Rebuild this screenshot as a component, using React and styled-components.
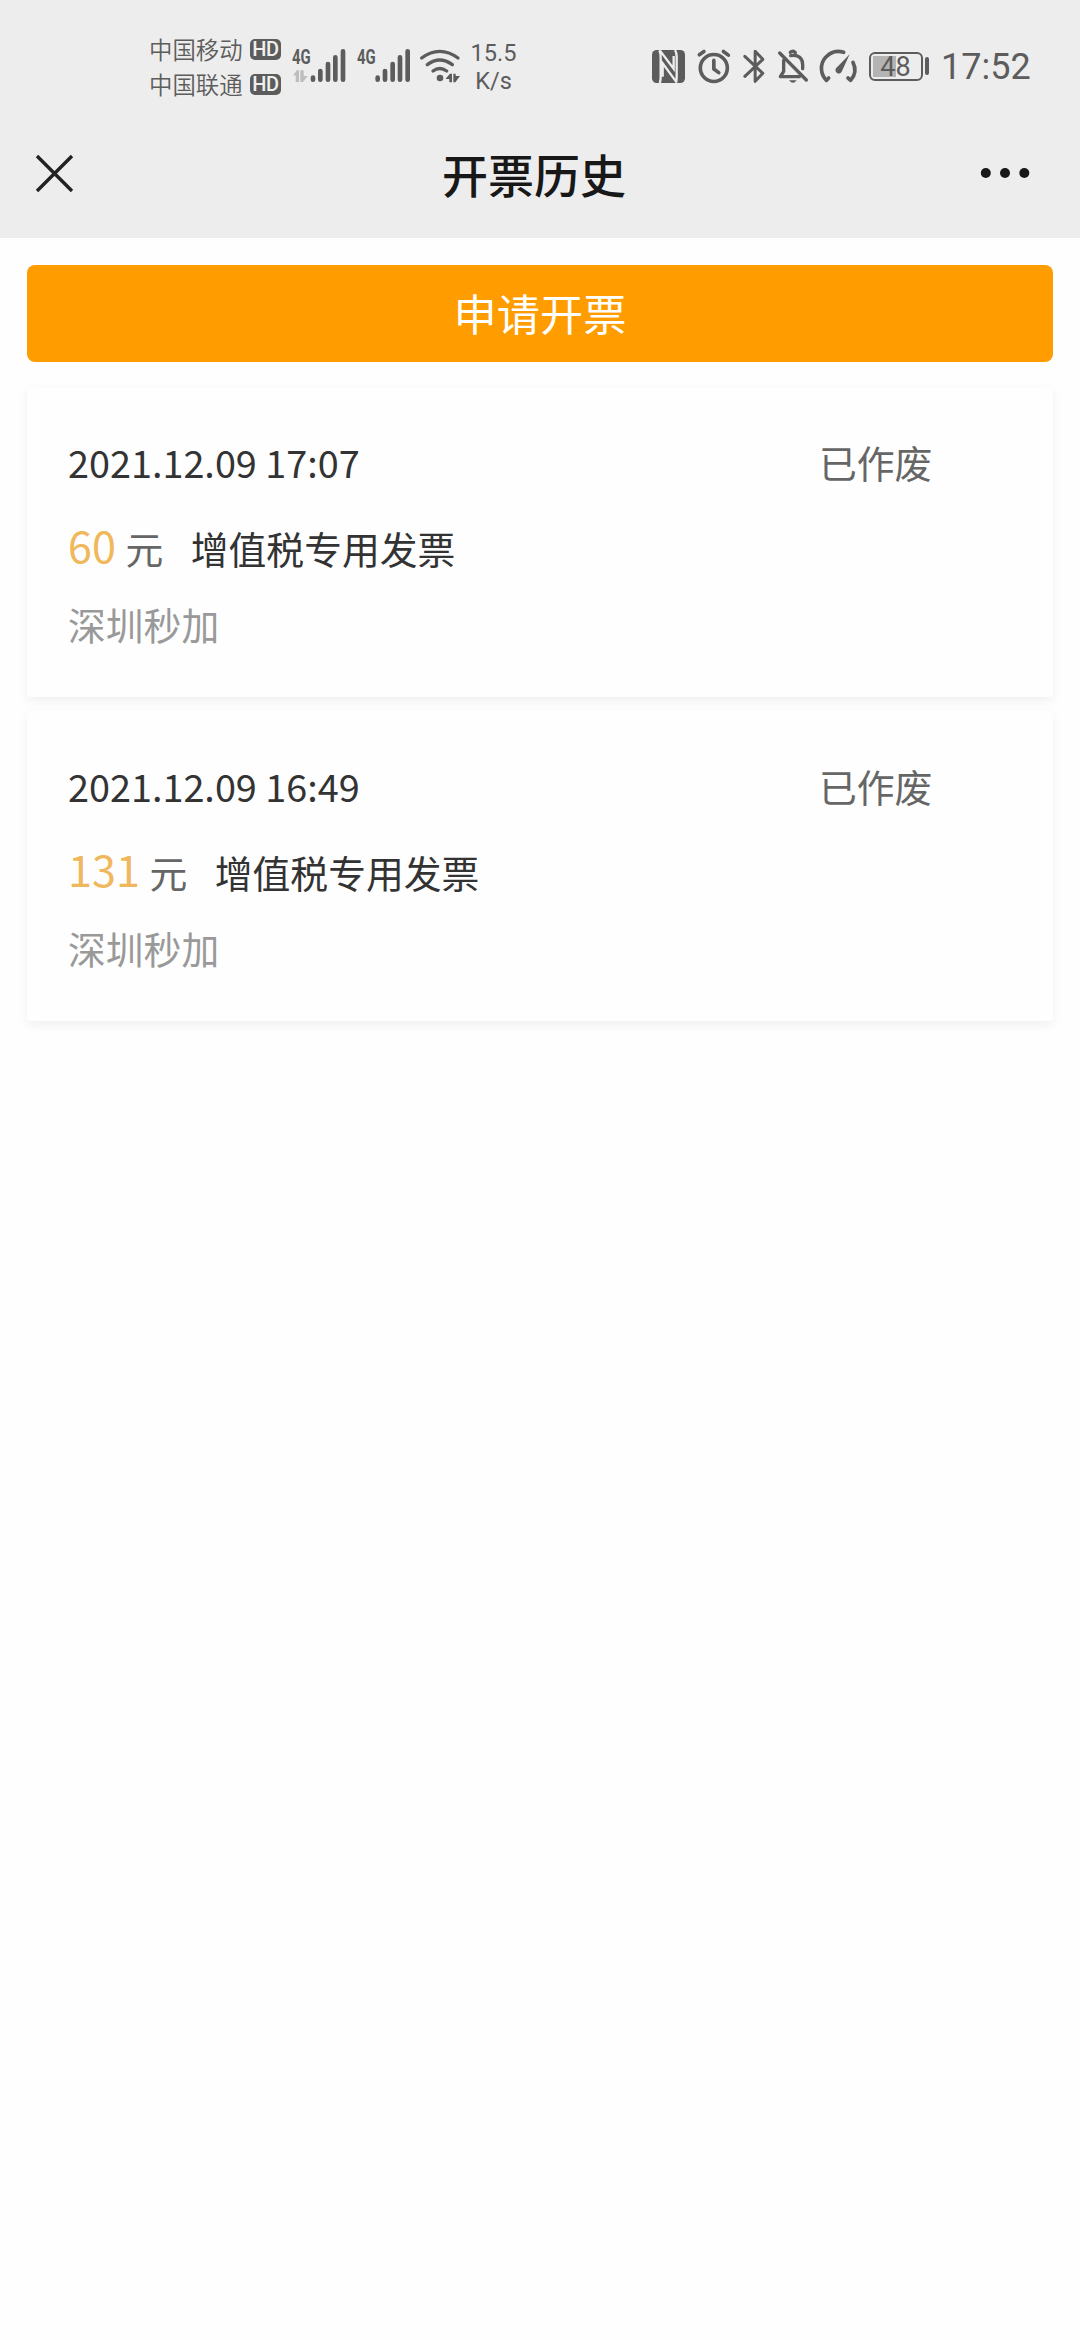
import React from "react";
import styled, { createGlobalStyle } from "styled-components";

const GlobalStyle = createGlobalStyle`
  * { box-sizing: border-box; }
  body {
    margin: 0;
    background: #fefefe;
    font-family: "Noto Sans CJK SC", sans-serif;
  }
`;

const INK = "#5c5c5c";

const Page = styled.div`
  width: 1080px;
  min-height: 2340px;
  display: flex;
  flex-direction: column;
`;

const Header = styled.header`
  background: #ededed;
  height: 238px;
`;

const StatusBar = styled.div`
  height: 132px;
  display: flex;
  align-items: center;
  justify-content: space-between;
  padding: 0 50px 0 149px;
  color: ${INK};
`;

const StatusGroup = styled.div`
  display: flex;
  align-items: center;
`;

const Carriers = styled.div`
  display: flex;
  flex-direction: column;
  padding-top: 2px;
  margin-right: 9px;
`;

const Carrier = styled.div`
  display: flex;
  align-items: center;
  height: 35px;
  gap: 7px;
  font-size: 23.4px;
  font-weight: 350;
  line-height: 32px;
`;

const CarrierName = styled.span`
  width: 94px;
  white-space: nowrap;
  transform: translateY(-1px);
`;

const HdBadge = styled.span`
  width: 31px;
  height: 21px;
  border-radius: 5px;
  background: ${INK};
  color: #f0f0f0;
  font: 500 20px/21px Roboto, sans-serif;
  text-align: center;
  letter-spacing: -0.3px;
`;

const Icon = styled.svg`
  display: block;
  flex: none;
  height: 40px;
  width: ${(p) => p.$width}px;
  margin-left: ${(p) => p.$gap || 0}px;
  overflow: visible;
  fill: none;
  stroke: ${INK};
  stroke-linecap: round;
  stroke-linejoin: round;
`;

const NetLabel = styled.text`
  font: 700 63px Roboto, sans-serif;
  fill: ${INK};
  stroke: none;
`;

const Speed = styled.div`
  margin-left: 10px;
  width: 48px;
  text-align: center;
  font: 400 23.5px/28px Roboto, sans-serif;
  padding-top: 1px;
`;

const Battery = styled.div`
  display: flex;
  align-items: center;
  gap: 2px;
  margin-left: 12px;
`;

const BatteryBody = styled.div`
  width: 54px;
  height: 29px;
  border: 2px solid ${INK};
  border-radius: 6px;
  background: linear-gradient(to right, #b4b4b4 23px, transparent 23px) 2px 2px / 46px 21px no-repeat;
  font: 400 27px/26px Roboto, sans-serif;
  text-align: center;
`;

const BatteryTip = styled.div`
  flex: none;
  width: 4.5px;
  height: 18px;
  border-radius: 2px;
  background: ${INK};
`;

const Clock = styled.div`
  margin-left: 12px;
  width: 89px;
  font: 400 36px/42px Roboto, sans-serif;
  white-space: nowrap;
  padding-top: 2px;
`;

const NavBar = styled.nav`
  height: 82px;
  display: grid;
  grid-template-columns: 148px 1fr 160px;
  align-items: center;
`;

const NavButton = styled.button`
  border: 0;
  padding: 0;
  background: none;
  display: flex;
  justify-content: ${(p) => (p.$end ? "flex-end" : "flex-start")};
  padding-left: ${(p) => (p.$end ? 0 : 34)}px;
  padding-right: ${(p) => (p.$end ? 50 : 0)}px;
`;

const Title = styled.h1`
  margin: 0;
  text-align: center;
  font-size: 46px;
  font-weight: 500;
  line-height: 66px;
  color: #181818;
`;

const Content = styled.main`
  padding: 27px;
  display: flex;
  flex-direction: column;
`;

const ApplyButton = styled.button`
  height: 97px;
  border: 0;
  border-radius: 8px;
  background: #ff9c00;
  color: #fff;
  font: 400 43.2px/60px "Noto Sans CJK SC", sans-serif;
  padding: 0 0 4px;
  margin-bottom: 25px;
`;

const Card = styled.section`
  height: 310px;
  margin-bottom: 14px;
  padding: 43px 41px 0;
  background: #fefefe;
  border-radius: 4px;
  box-shadow: 0 4px 11px rgba(0, 0, 0, 0.06);
  font-size: 37.8px;
  line-height: 64px;
  color: #333;
`;

const CardTop = styled.div`
  display: grid;
  grid-template-columns: 751px 1fr;
`;

const Status = styled.span`
  color: #666;
`;

const AmountRow = styled.div`
  display: flex;
  align-items: baseline;
  margin-top: 19px;
  height: 66px;
`;

const Amount = styled.span`
  font-size: 43.2px;
  color: #f0b85c;
  transform: translateY(-1px);
`;

const Unit = styled.span`
  color: #666;
  margin: 0 27.5px 0 9.5px;
`;

const Company = styled.div`
  color: #999;
  margin-top: 13px;
`;

const invoices = [
  { time: "2021.12.09 17:07", amount: 60, type: "增值税专用发票", company: "深圳秒加", status: "已作废" },
  { time: "2021.12.09 16:49", amount: 131, type: "增值税专用发票", company: "深圳秒加", status: "已作废" },
];

function Signal({ data, gap }) {
  const shift = data ? 0 : -1;
  return (
    <Icon $width={54} $gap={gap} viewBox="35 78 162 120">
      <NetLabel x="35" y="131" textLength="56" lengthAdjust="spacingAndGlyphs">4G</NetLabel>
      {data && (
        <path d="M38 166L50 151H56V186H46V166ZM60 151H70V168H82L68 186H60Z" fill="#bdbdbd" stroke="none" />
      )}
      <g strokeWidth="14" transform={`translate(${shift} 0)`}>
        <path d="M98 173V179M120 153V179M143 132V179M165 112V179M188 94V179" />
      </g>
    </Icon>
  );
}

function Wifi() {
  return (
    <Icon $width={40} $gap={9} viewBox="418 78 120 120" strokeWidth="10">
      <path d="M423 114Q477 74 532 114M440 134Q477 106 515 134M457 153Q477 138 498 153" />
      <circle cx="478" cy="174" r="10" fill={INK} stroke="none" />
      <path d="M496 175L508 161H514V187H506V177H496ZM518 161H525V168H538L524 187H518Z" fill={INK} stroke="none" />
    </Icon>
  );
}

function Nfc() {
  return (
    <Icon $width={33} viewBox="66 78 99 120">
      <rect x="66" y="90" width="99" height="99" rx="14" fill={INK} stroke="none" />
      <path
        d="M88 91Q92 98 92 112V172Q92 184 89 189M90 92L131 146V108M98 170V130L140 187M135 90Q140 98 140 110V170Q140 182 138 188"
        stroke="#ededed"
        strokeWidth="7"
        strokeLinejoin="miter"
        strokeLinecap="butt"
      />
    </Icon>
  );
}

function Alarm() {
  return (
    <Icon $width={32} $gap={13} viewBox="202 78 97 120" strokeWidth="11">
      <circle cx="250" cy="144" r="41" />
      <path d="M250 121V147L265 158" />
      <path d="M206 104L220 94M279 94L294 105" />
    </Icon>
  );
}

function Bluetooth() {
  return (
    <Icon $width={22} $gap={13} viewBox="335 78 65 120" strokeWidth="9">
      <path d="M340 109L394 160L371 184V94L394 118L340 169" />
    </Icon>
  );
}

function BellOff() {
  return (
    <Icon $width={30} $gap={13} viewBox="440 78 90 120" strokeWidth="10">
      <path d="M445 99L525 180" />
      <path d="M457 121V154L447 170H504" />
      <path d="M478 107C502 102 514 116 514 134V146" />
      <path d="M477 97Q485 90 492 98" />
      <path d="M473 181H496Q485 196 473 181Z" fill={INK} stroke="none" />
    </Icon>
  );
}

function Gauge() {
  return (
    <Icon $width={37} $gap={12} viewBox="566 78 111 120" strokeWidth="11">
      <path d="M592 174L585 181C567 162 565 133 582 113C597 96 617 91 637 97" />
      <path d="M665 127C675 147 671 166 658 181L650 174" />
      <path d="M655 103L632 153A10 10 0 1 1 614 145Z" fill={INK} stroke="none" />
    </Icon>
  );
}

function InvoiceCard({ invoice }) {
  return (
    <Card>
      <CardTop>
        <span>{invoice.time}</span>
        <Status>{invoice.status}</Status>
      </CardTop>
      <AmountRow>
        <Amount>{invoice.amount}</Amount>
        <Unit>元</Unit>
        <span>{invoice.type}</span>
      </AmountRow>
      <Company>{invoice.company}</Company>
    </Card>
  );
}

export default function App() {
  return (
    <Page>
      <GlobalStyle />
      <Header>
        <StatusBar>
          <StatusGroup>
            <Carriers>
              {["中国移动", "中国联通"].map((name) => (
                <Carrier key={name}>
                  <CarrierName>{name}</CarrierName>
                  <HdBadge>HD</HdBadge>
                </Carrier>
              ))}
            </Carriers>
            <Signal data gap={1.5} />
            <Signal gap={11} />
            <Wifi />
            <Speed>
              <div>15.5</div>
              <div>K/s</div>
            </Speed>
          </StatusGroup>
          <StatusGroup>
            <Nfc />
            <Alarm />
            <Bluetooth />
            <BellOff />
            <Gauge />
            <Battery>
              <BatteryBody>48</BatteryBody>
              <BatteryTip />
            </Battery>
            <Clock>17:52</Clock>
          </StatusGroup>
        </StatusBar>
        <NavBar>
          <NavButton aria-label="关闭">
            <svg width="40" height="40" viewBox="0 0 40 40" stroke="#222" strokeWidth="3.4">
              <path d="M3 3L38 38M38 3L3 38" />
            </svg>
          </NavButton>
          <Title>开票历史</Title>
          <NavButton $end aria-label="更多">
            <svg width="50" height="12" viewBox="0 0 50 12" fill="#181818">
              <circle cx="5.8" cy="6" r="5" />
              <circle cx="25" cy="6" r="5" />
              <circle cx="44.3" cy="6" r="5" />
            </svg>
          </NavButton>
        </NavBar>
      </Header>
      <Content>
        <ApplyButton>申请开票</ApplyButton>
        {invoices.map((invoice) => (
          <InvoiceCard key={invoice.time} invoice={invoice} />
        ))}
      </Content>
    </Page>
  );
}
